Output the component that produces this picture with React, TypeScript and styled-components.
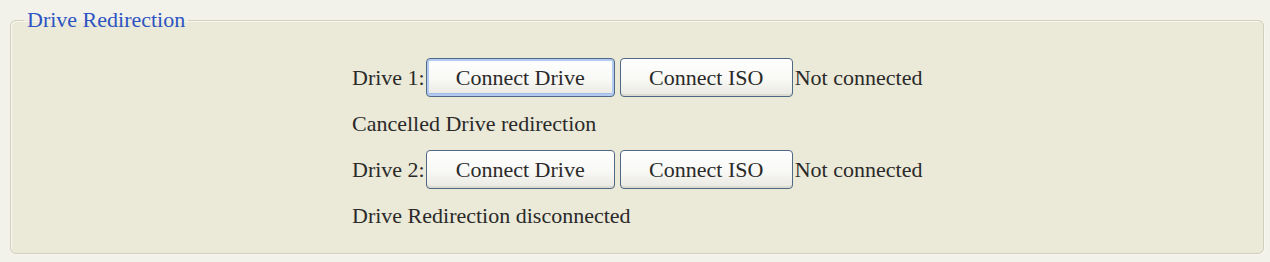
import React from "react";
import styled, { createGlobalStyle, css } from "styled-components";

const Global = createGlobalStyle`
  html, body {
    margin: 0;
    padding: 0;
    background: #f3f2ea;
  }
  body {
    font-family: "Liberation Serif", "Times New Roman", serif;
    color: #2a2a2a;
  }
`;

const Page = styled.div`
  width: 1270px;
  height: 262px;
  padding: 9px 0 0 10px;
  box-sizing: border-box;
`;

const Group = styled.fieldset`
  box-sizing: border-box;
  width: 1254px;
  height: 245px;
  margin: 0;
  padding: 27px 0 0 0;
  border: 1px solid #d2cfbd;
  border-radius: 6px;
  background: #ebe9d8;
  box-shadow: inset 1px 1px 0 #f7f6ef, 1px 1px 0 #f7f6ef;
`;

const Title = styled.legend`
  margin-left: 13px;
  padding: 0 3px;
  font-size: 22px;
  line-height: 22px;
  color: #2d54c2;
`;

const Column = styled.div`
  display: flex;
  flex-direction: column;
  padding-left: 341px;
`;

const DriveRow = styled.div`
  display: flex;
  align-items: center;
  height: 39px;
`;

const Buttons = styled.div`
  display: flex;
  gap: 5px;
  margin-left: 1px;
`;

const Label = styled.span`
  font-size: 22px;
`;

const Status = styled.span`
  font-size: 22px;
  margin-left: 2px;
`;

const Button = styled.button<{ $w: number; $focused?: boolean }>`
  box-sizing: border-box;
  width: ${(p) => p.$w}px;
  height: 39px;
  padding: 0;
  font-family: "Liberation Serif", "Times New Roman", serif;
  font-size: 22px;
  color: #2a2a2a;
  border: 1px solid #4f6884;
  border-radius: 4px;
  background: linear-gradient(#ffffff 0%, #f8f8f5 55%, #e9e8e1 100%);
  box-shadow: inset 0 -2px 0 #dcdbd2;
  ${(p) =>
    p.$focused &&
    css`
      box-shadow: inset 0 0 0 2px #b3cbf0, inset 0 -3px 0 #9fbbe8;
    `}
`;

const Message = styled.div`
  font-size: 22px;
  height: 53px;
  line-height: 53px;
`;

type Drive = { n: number; msg: string; focused?: boolean };

const drives: Drive[] = [
  { n: 1, msg: "Cancelled Drive redirection", focused: true },
  { n: 2, msg: "Drive Redirection disconnected" },
];

export default function App() {
  return (
    <>
      <Global />
      <Page>
        <Group>
          <Title>Drive Redirection</Title>
          <Column>
            {drives.map((d) => (
              <React.Fragment key={d.n}>
                <DriveRow>
                  <Label>Drive {d.n}:</Label>
                  <Buttons>
                    <Button $w={189} $focused={d.focused}>
                      Connect Drive
                    </Button>
                    <Button $w={173}>Connect ISO</Button>
                  </Buttons>
                  <Status>Not connected</Status>
                </DriveRow>
                <Message>{d.msg}</Message>
              </React.Fragment>
            ))}
          </Column>
        </Group>
      </Page>
    </>
  );
}
